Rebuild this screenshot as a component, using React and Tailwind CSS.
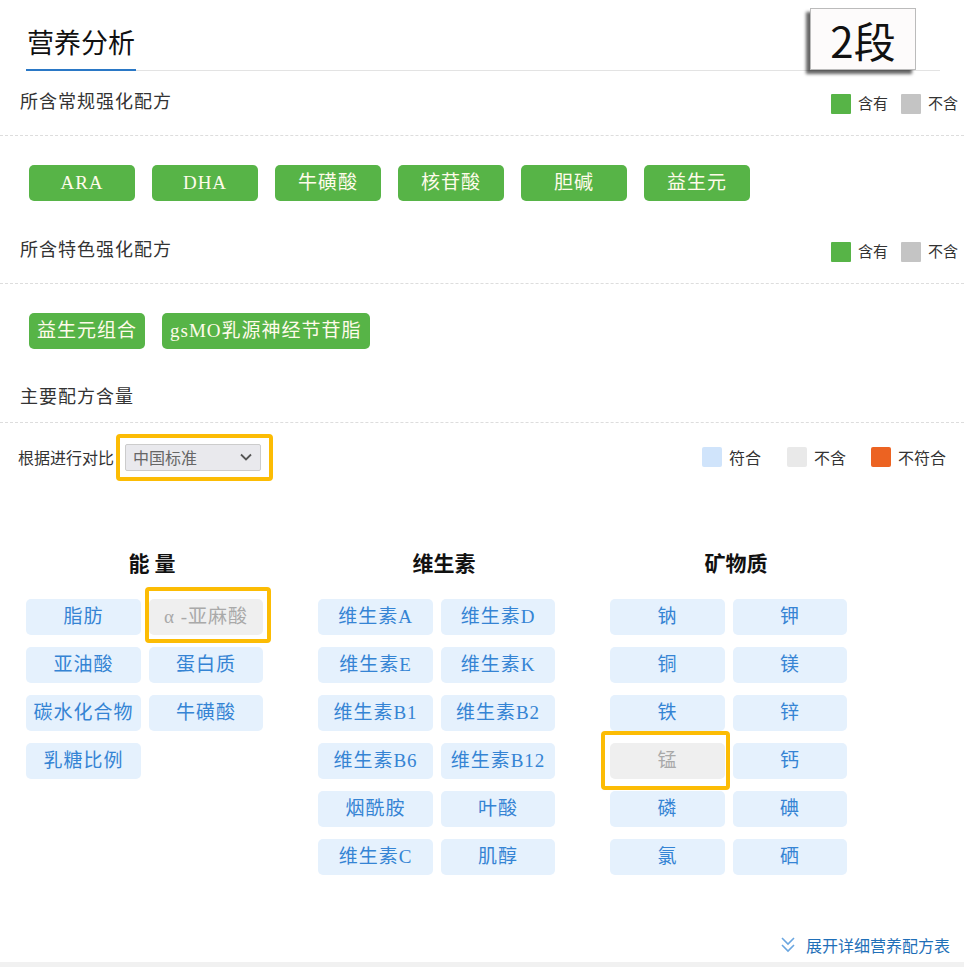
import { Fragment } from 'react';

const regular = ['ARA', 'DHA', '牛磺酸', '核苷酸', '胆碱', '益生元'];
const special = ['益生元组合', 'gsMO乳源神经节苷脂'];

const groups = [
  { title: '能 量', items: ['脂肪', 'α -亚麻酸', '亚油酸', '蛋白质', '碳水化合物', '牛磺酸', '乳糖比例'] },
  { title: '维生素', items: ['维生素A', '维生素D', '维生素E', '维生素K', '维生素B1', '维生素B2', '维生素B6', '维生素B12', '烟酰胺', '叶酸', '维生素C', '肌醇'] },
  { title: '矿物质', items: ['钠', '钾', '铜', '镁', '铁', '锌', '锰', '钙', '磷', '碘', '氯', '硒'] },
];

const missing = ['α -亚麻酸', '锰'];

function Legend() {
  return (
    <div className="mt-[6px] flex items-center text-[15px] text-[#333]">
      <span className="h-[20px] w-[20px] rounded-[1px] bg-[#57b447]" />
      <span className="ml-[7px]">含有</span>
      <span className="ml-[13px] h-[20px] w-[20px] rounded-[1px] bg-[#c4c4c4]" />
      <span className="ml-[7px]">不含</span>
    </div>
  );
}

function GreenChip({ label }) {
  return (
    <div className="flex h-[36px] min-w-[106px] items-center justify-center rounded-[5px] bg-[#57b447] px-[8px] font-['Liberation_Serif','Noto_Sans_CJK_SC',serif] text-[19px] tracking-[1px] text-[#fffbea]">
      {label}
    </div>
  );
}

function Chip({ label }) {
  const off = missing.includes(label);
  return (
    <div className={`flex h-[36px] items-center justify-center rounded-[5px] font-['Liberation_Serif','Noto_Sans_CJK_SC',serif] text-[19px] tracking-[1px] ${off ? 'bg-[#efefef] text-[#a9a9a9]' : 'bg-[#e5f1fd] text-[#3584d4]'}`}>
      {label}
    </div>
  );
}

export default function App() {
  return (
    <div className="relative flex h-[967px] w-[964px] flex-col overflow-hidden bg-white font-['Noto_Sans_CJK_SC',sans-serif] text-[#333]">
      {/* header */}
      <div className="ml-[26px] mr-[24px] flex h-[71px] items-end border-b border-[#e3e3e3]">
        <h1 className="-mb-px border-b-2 border-[#2a78c6] pb-[9px] pl-px pr-[1px] text-[27px] leading-[36px] text-[#111]">营养分析</h1>
      </div>
      <div className="absolute left-[810px] top-[8px] flex h-[62px] w-[106px] items-center justify-center border border-[#bbb] bg-[#fdfbfb] text-[42px] text-[#111] shadow-[-4px_4px_3px_rgba(0,0,0,0.6)]">
        2段
      </div>

      {/* regular */}
      <div className="flex h-[65px] items-center justify-between border-b border-dashed border-[#ddd] pb-[5px] pl-[20px] pr-[6px]">
        <span className="text-[18px] tracking-[1px]">所含常规强化配方</span>
        <Legend />
      </div>
      <div className="flex gap-[17px] pb-[18px] pl-[29px] pt-[29px]">
        {regular.map((r) => <GreenChip key={r} label={r} />)}
      </div>

      {/* special */}
      <div className="flex h-[65px] items-center justify-between border-b border-dashed border-[#ddd] pb-[5px] pl-[20px] pr-[6px]">
        <span className="text-[18px] tracking-[1px]">所含特色强化配方</span>
        <Legend />
      </div>
      <div className="flex gap-[17px] pb-[20px] pl-[29px] pt-[29px]">
        {special.map((r) => <GreenChip key={r} label={r} />)}
      </div>

      {/* main */}
      <div className="flex h-[54px] items-center border-b border-dashed border-[#ddd] pl-[20px]">
        <span className="text-[18px] tracking-[1px]">主要配方含量</span>
      </div>
      <div className="flex h-[68px] items-center justify-between pl-[18px] pr-[18px]">
        <div className="flex items-center">
          <span className="text-[16px] text-[#333]">根据进行对比</span>
          <div className="ml-[11px] flex h-[27px] w-[136px] items-center justify-between rounded-[2px] border border-[#ccc] bg-[#e9e9ed] pl-[7px] pr-[8px] text-[16px] text-[#666]">
            <span>中国标准</span>
            <svg width="12" height="8" viewBox="0 0 12 8" fill="none" stroke="#555" strokeWidth="1.8"><path d="M1 1.5l5 5 5-5" /></svg>
          </div>
        </div>
        <div className="flex items-center text-[16px] text-[#333]">
          <span className="h-[20px] w-[20px] rounded-[2px] bg-[#d0e4fb]" />
          <span className="ml-[7px]">符合</span>
          <span className="ml-[26px] h-[20px] w-[20px] rounded-[2px] bg-[#e9e9e9]" />
          <span className="ml-[7px]">不含</span>
          <span className="ml-[25px] h-[20px] w-[20px] rounded-[2px] bg-[#ec6322]" />
          <span className="ml-[7px]">不符合</span>
        </div>
      </div>

      {/* groups */}
      <div className="flex pl-[26px] pt-[57px]">
        {groups.map((g) => (
          <div key={g.title} className="w-[292px]">
            <div className="mb-[23px] w-[252px] text-center text-[21px] font-bold leading-[28px] text-[#111]">{g.title}</div>
            <div className="grid grid-cols-[115px_114px] gap-x-[8px] gap-y-[12px]">
              {g.items.map((it) => (
                <Fragment key={it}><Chip label={it} /></Fragment>
              ))}
            </div>
          </div>
        ))}
      </div>

      {/* overlays */}
      <div className="absolute left-[116px] top-[434px] h-[47px] w-[157px] rounded-[4px] border-4 border-[#fcbc04]" />
      <div className="absolute left-[145px] top-[587px] h-[56px] w-[126px] rounded-[4px] border-4 border-[#fcbc04]" />
      <div className="absolute left-[601px] top-[731px] h-[59px] w-[129px] rounded-[4px] border-4 border-[#fcbc04]" />

      {/* expand link */}
      <div className="mt-auto flex items-center justify-end pr-[14px] text-[16px] text-[#1f6fb8]">
        <svg width="16" height="18" viewBox="0 0 16 18" fill="none" stroke="#6aa6e0" strokeWidth="1.6"><path d="M2 2l6 6 6-6M2 9l6 6 6-6" /></svg>
        <span className="ml-[10px] leading-[24px]">展开详细营养配方表</span>
      </div>
      <div className="mt-[5px] h-[5px] bg-[#f1f1f1]" />
    </div>
  );
}
